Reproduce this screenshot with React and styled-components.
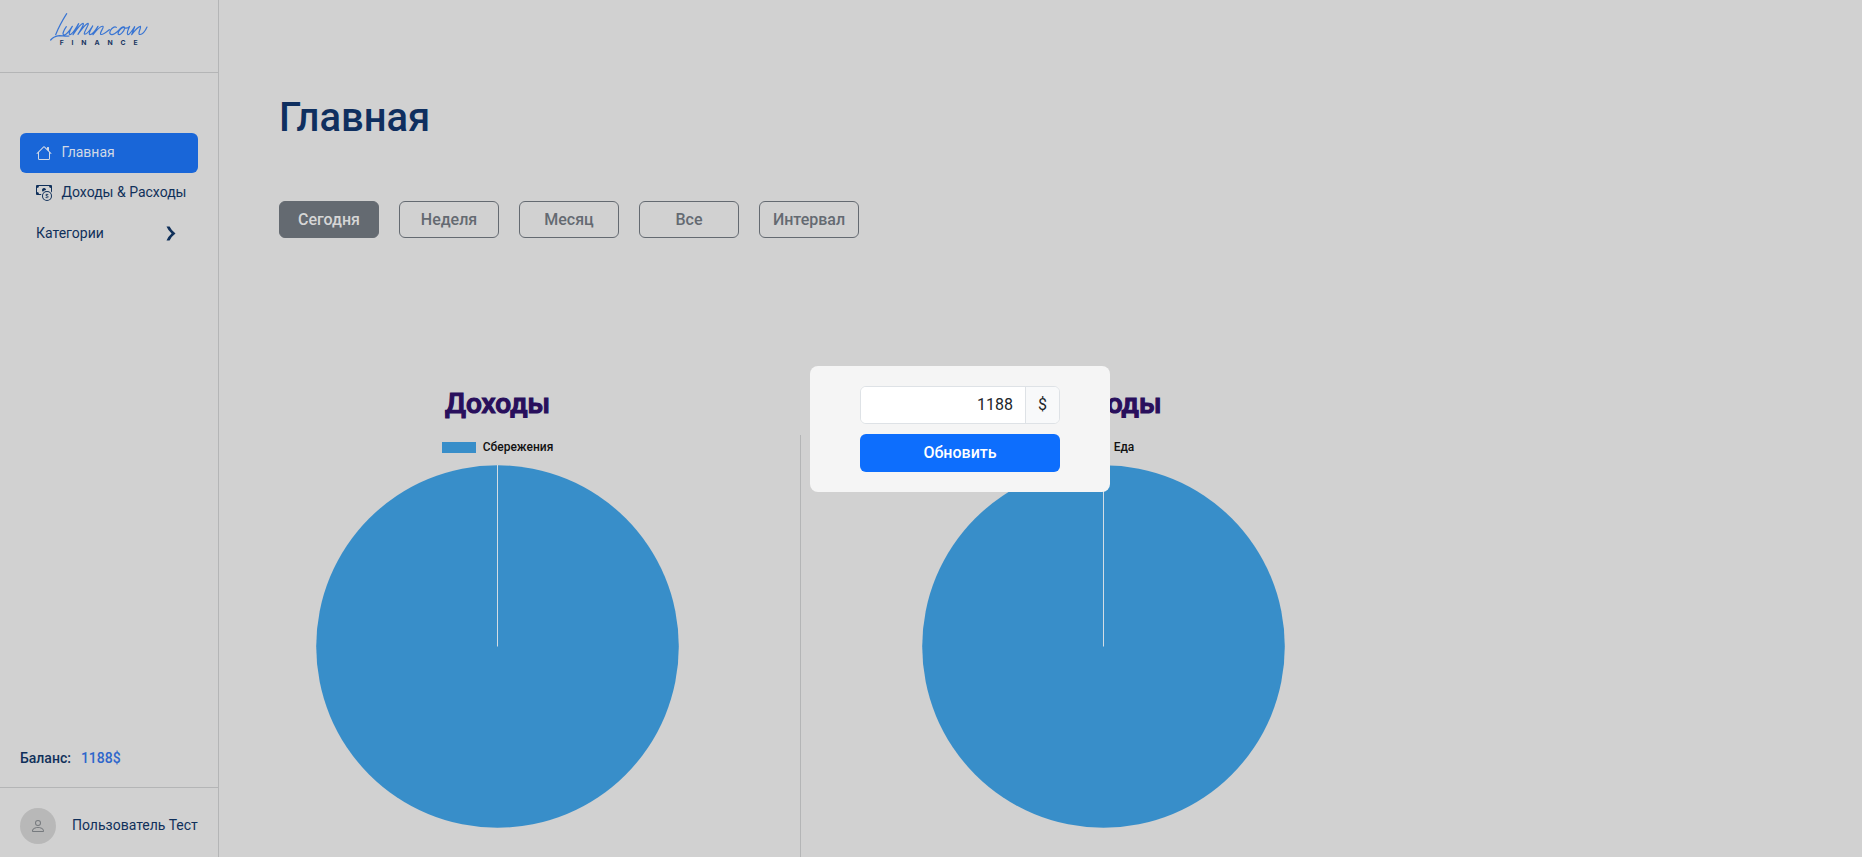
import React from "react";
import styled, { createGlobalStyle } from "styled-components";
import { BsHouse, BsCashCoin, BsPerson } from "react-icons/bs";

const GlobalStyle = createGlobalStyle`
  *, *::before, *::after { box-sizing: border-box; }
  body {
    margin: 0;
    overflow: hidden;
    background: #d1d1d1;
    color: #052c65;
    font-family: Roboto, sans-serif;
    font-size: 16px;
    line-height: 1.5;
  }
`;

const Page = styled.div`
  display: flex;
  height: 857px;
  overflow: hidden;
`;

const Sidebar = styled.aside`
  display: flex;
  flex-direction: column;
  flex: none;
  width: 219px;
  border-right: 1px solid #b4b5b6;
  font-size: 14px;
  color: #10305a;
`;

const LogoArea = styled.div`
  height: 73px;
  border-bottom: 1px solid #b4b5b6;
  padding: 12px 0 0 50px;
`;

const Logo = styled.svg`
  display: block;
  width: 100px;
  height: 36px;
`;

const Nav = styled.nav`
  display: flex;
  flex-direction: column;
  padding: 60px 20px 0;
`;

const NavItem = styled.a`
  display: flex;
  align-items: center;
  gap: 9.5px;
  height: 40px;
  padding: 0 0 2px 16px;
  border-radius: 6px;
  white-space: nowrap;
  color: ${(p) => (p.$active ? "#d1d9e6" : "#10305a")};
  background: ${(p) => (p.$active ? "#1966d8" : "transparent")};
  svg { flex: none; position: relative; top: 1px; }
`;

const Category = styled(NavItem)`
  justify-content: space-between;
  padding: 1px 22px 0 16px;
  svg { top: 0; }
`;

const Balance = styled.div`
  display: flex;
  gap: 10px;
  margin-top: auto;
  padding: 0 20px 18px;
  font-weight: 500;
`;

const Amount = styled.span`
  color: #2e66cb;
`;

const User = styled.div`
  display: flex;
  align-items: center;
  gap: 16px;
  height: 70px;
  padding: 7px 0 0 20px;
  border-top: 1px solid #b4b5b6;
  white-space: nowrap;
`;

const Avatar = styled.span`
  display: flex;
  align-items: center;
  justify-content: center;
  width: 36px;
  height: 36px;
  border-radius: 50%;
  background: #b8b8b8;
  color: #767a7e;
`;

const UserName = styled.span`
  padding-bottom: 1px;
`;

const Main = styled.main`
  flex: 1;
  padding: 94px 0 0 60px;
`;

const Title = styled.h1`
  margin: 0;
  font-size: 40px;
  font-weight: 500;
  line-height: 48px;
  color: #0f2f5f;
`;

const Filters = styled.div`
  display: flex;
  gap: 20px;
  margin-top: 59px;
`;

const FilterButton = styled.button`
  width: 100px;
  height: 37px;
  padding: 0;
  border: 1px solid #646a71;
  border-radius: 6px;
  font: 500 16px/24px Roboto, sans-serif;
  background: ${(p) => (p.$active ? "#646a71" : "transparent")};
  color: ${(p) => (p.$active ? "#d6d6d6" : "#646a71")};
`;

const Charts = styled.div`
  display: flex;
  margin-top: 145px;
`;

const ChartColumn = styled.section`
  display: flex;
  flex-direction: column;
  align-items: center;
  width: 437px;
`;

const ChartTitle = styled.h2`
  margin: 0;
  padding-top: 1px;
  font-size: 28px;
  line-height: 40px;
  font-weight: 500;
  -webkit-text-stroke: 1.2px #290f5c;
  color: #290f5c;
`;

const Legend = styled.div`
  display: flex;
  align-items: center;
  gap: 7px;
  height: 18px;
  margin-top: 14px;
  font-size: 12px;
  font-weight: 500;
  color: #111;
`;

const Swatch = styled.span`
  width: 34px;
  height: 11px;
  background: #388ec9;
`;

const Pie = styled.svg`
  display: block;
  width: 363px;
  height: 363px;
  margin-top: 9px;
`;

const Divider = styled.div`
  width: 1px;
  height: 440px;
  margin: 52px 84px 0 84px;
  background: #b4b5b6;
`;

const Modal = styled.div`
  position: absolute;
  top: 366px;
  left: 810px;
  display: flex;
  flex-direction: column;
  gap: 10px;
  width: 300px;
  height: 126px;
  padding: 20px 50px;
  border-radius: 8px;
  background: #f5f5f5;
`;

const InputGroup = styled.div`
  display: flex;
  height: 38px;
  border: 1px solid #dee2e6;
  border-radius: 6px;
  overflow: hidden;
  background: #fff;
  color: #212529;
`;

const AmountInput = styled.input`
  flex: 1;
  min-width: 0;
  padding: 0 12px;
  border: 0;
  background: #fff;
  color: inherit;
  font: 400 16px/24px Roboto, sans-serif;
  text-align: right;
`;

const Currency = styled.span`
  width: 34px;
  line-height: 36px;
  text-align: center;
  border-left: 1px solid #dee2e6;
  background: #f8f9fa;
`;

const SubmitButton = styled.button`
  height: 38px;
  padding: 0;
  border: 0;
  border-radius: 6px;
  background: #0d6efd;
  color: #fff;
  font: 500 16px/24px Roboto, sans-serif;
`;

function PieChart({ title, label }) {
  return (
    <ChartColumn>
      <ChartTitle>{title}</ChartTitle>
      <Legend>
        <Swatch />
        {label}
      </Legend>
      <Pie viewBox="0 0 363 363">
        <circle cx="181.5" cy="181.5" r="181.3" fill="#388ec9" />
        <path d="M181.5 0V181.5" stroke="#d3dde4" strokeWidth="1" />
      </Pie>
    </ChartColumn>
  );
}

const filters = ["Сегодня", "Неделя", "Месяц", "Все", "Интервал"];

export default function App() {
  return (
    <>
      <GlobalStyle />
      <Page>
        <Sidebar>
          <LogoArea>
            <Logo viewBox="150 36 300 108">
              <path
                d="M200 41C190 57 175 84 167 104M152 120C157 114 167 108 178 107C188 107 198 110 207 108M199 80C192 90 185 104 192 105C200 105 209 91 217 79C211 90 204 103 210 104C217 104 226 87 236 71L219 104C229 89 242 71 249 70C254 72 242 89 234 103C245 88 256 71 264 70C269 72 250 97 253 102C260 106 270 90 278 78C272 89 264 102 270 104C277 104 287 90 294 79L279 104C290 90 302 77 309 79C313 83 298 97 302 103C308 106 318 97 328 89M349 82C342 76 327 91 330 101C336 109 350 99 360 87C366 80 374 78 374 84C373 94 360 107 355 103C352 97 362 84 369 82C377 86 383 86 389 79C384 90 378 101 384 104C390 103 397 91 404 80L395 104C404 92 414 80 421 79C425 82 413 98 418 103C426 106 436 93 441 81"
                fill="none"
                stroke="#3975d3"
                strokeWidth="3.6"
                strokeLinecap="round"
                strokeLinejoin="round"
              />
              <text x="179" y="135" textLength="234" fontFamily="Inter, sans-serif" fontSize="20.5" fontWeight="700" fill="#193661">FINANCE</text>
            </Logo>
          </LogoArea>
          <Nav>
            <NavItem $active>
              <BsHouse size={16} />
              Главная
            </NavItem>
            <NavItem>
              <BsCashCoin size={16} />
              Доходы &amp; Расходы
            </NavItem>
            <Category>
              Категории
              <svg width="10" height="15" viewBox="0 0 10 15">
                <path d="M0.5 0.5H3.6Q5.6 4.8 9.5 7.4Q5.6 10.2 3.6 14.5H0.5Q2.2 10.3 5.6 7.4Q2.2 4.6 0.5 0.5Z" fill="#10305a" />
              </svg>
            </Category>
          </Nav>
          <Balance>
            Баланс: <Amount>1188$</Amount>
          </Balance>
          <User>
            <Avatar><BsPerson size={16} /></Avatar>
            <UserName>Пользователь Тест</UserName>
          </User>
        </Sidebar>
        <Main>
          <Title>Главная</Title>
          <Filters>
            {filters.map((name, i) => (
              <FilterButton key={name} $active={i === 0}>{name}</FilterButton>
            ))}
          </Filters>
          <Charts>
            <PieChart title="Доходы" label="Сбережения" />
            <Divider />
            <PieChart title="Расходы" label="Еда" />
          </Charts>
        </Main>
      </Page>
      <Modal>
        <InputGroup>
          <AmountInput defaultValue="1188" />
          <Currency>$</Currency>
        </InputGroup>
        <SubmitButton>Обновить</SubmitButton>
      </Modal>
    </>
  );
}
